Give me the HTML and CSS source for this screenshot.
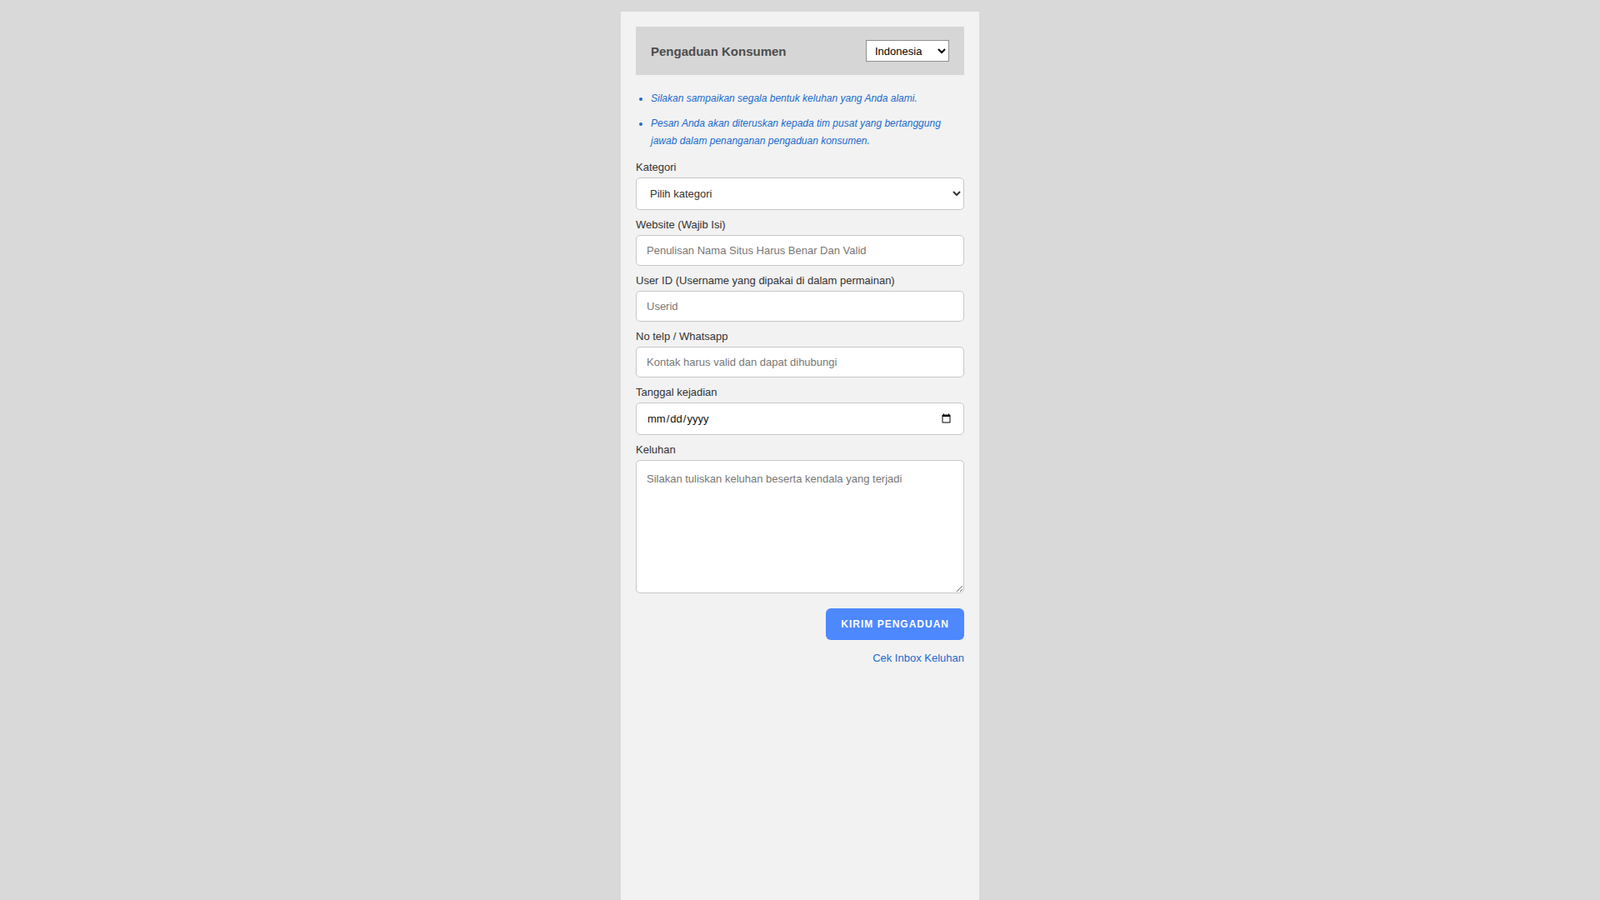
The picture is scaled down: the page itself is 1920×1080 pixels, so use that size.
FILE: index.html
```html
<!DOCTYPE html>
<html lang="id">
<head>
<meta charset="UTF-8">
<meta name="viewport" content="width=device-width, initial-scale=1.0">
<title>Pengaduan Konsumen</title>
<link rel="stylesheet" href="styles.css">
</head>
<body>
<div class="wrapper">
    <div class="header">
        <div class="title">Pengaduan Konsumen</div>
        <select class="lang">
            <option>Indonesia</option>
            <option>English</option>
        </select>
    </div>
    <ul class="notes">
        <li>Silakan sampaikan segala bentuk keluhan yang Anda alami.</li>
        <li>Pesan Anda akan diteruskan kepada tim pusat yang bertanggung jawab dalam penanganan pengaduan konsumen.</li>
    </ul>
    <form class="form">
        <div class="group">
            <label>Kategori</label>
            <select class="field field-select">
                <option>Pilih kategori</option>
            </select>
        </div>
        <div class="group">
            <label>Website (Wajib Isi)</label>
            <input type="text" class="field" placeholder="Penulisan Nama Situs Harus Benar Dan Valid">
        </div>
        <div class="group">
            <label>User ID (Username yang dipakai di dalam permainan)</label>
            <input type="text" class="field" placeholder="Userid">
        </div>
        <div class="group">
            <label>No telp / Whatsapp</label>
            <input type="text" class="field" placeholder="Kontak harus valid dan dapat dihubungi">
        </div>
        <div class="group">
            <label>Tanggal kejadian</label>
            <input type="date" class="field field-date">
        </div>
        <div class="group">
            <label>Keluhan</label>
            <textarea class="field field-area" placeholder="Silakan tuliskan keluhan beserta kendala yang terjadi"></textarea>
        </div>
        <div class="actions">
            <button type="button" class="btn-send">KIRIM PENGADUAN</button>
        </div>
        <div class="inbox">
            <a href="#">Cek Inbox Keluhan</a>
        </div>
    </form>
</div>
</body>
</html>
```

FILE: styles.css
```css
body {
    font-family: 'Liberation Sans', Arial, sans-serif;
    background-color: #d9d9d9;
    color: #333;
    margin: 0;
    padding: 14px 0 0;
}
.wrapper {
    width: 430px;
    min-height: calc(100vh - 14px);
    margin: 0 auto;
    padding: 18px;
    box-sizing: border-box;
    background-color: #f2f2f2;
}
.header {
    display: flex;
    justify-content: space-between;
    align-items: center;
    height: 58px;
    padding: 0 18px;
    background-color: #d6d6d6;
}
.title {
    font-size: 15px;
    font-weight: bold;
    color: #4d4d4d;
    padding-top: 1px;
}
.lang {
    width: 100px;
    height: 26px;
    font-family: 'Liberation Sans', Arial, sans-serif;
    font-size: 13px;
    color: #000;
    background-color: #fff;
    border: 1px solid #8f8f8f;
    border-radius: 0;
    padding: 0 0 0 6px;
}
.notes {
    margin: 18px 0 13px;
    padding-left: 18px;
    color: #1a6bcc;
    font-size: 12px;
    font-style: italic;
    line-height: 21px;
}
.notes li {
    margin-bottom: 9px;
}
.notes li:last-child {
    margin-bottom: 0;
}
.group {
    margin-bottom: 10px;
}
.group label {
    display: block;
    font-size: 13px;
    line-height: 16px;
    color: #333;
    margin-bottom: 4px;
}
.field {
    display: block;
    width: 100%;
    box-sizing: border-box;
    height: 37px;
    padding: 0 12px;
    font-family: 'Liberation Sans', Arial, sans-serif;
    font-size: 13px;
    color: #333;
    background-color: #fff;
    border: 1px solid #c4c7cc;
    border-radius: 5px;
    outline: none;
}
.field::placeholder {
    color: #777;
}
.field-select {
    height: 39px;
    padding-left: 12px;
}
.field-date {
    height: 39px;
    color: #111;
}
.field-area {
    height: 160px;
    padding: 11px 12px;
    line-height: 21px;
    resize: vertical;
}
.actions {
    display: flex;
    justify-content: flex-end;
    margin-top: 18px;
}
.btn-send {
    height: 38px;
    padding: 0 18px;
    font-family: 'Liberation Sans', Arial, sans-serif;
    font-size: 12px;
    font-weight: bold;
    letter-spacing: 1px;
    color: #fff;
    background-color: #4d88ff;
    border: none;
    border-radius: 6px;
    cursor: pointer;
}
.btn-send:hover {
    background-color: #3a78f0;
}
.inbox {
    text-align: right;
    margin-top: 14px;
    font-size: 13px;
}
.inbox a {
    color: #1a6bcc;
    text-decoration: none;
}
```
